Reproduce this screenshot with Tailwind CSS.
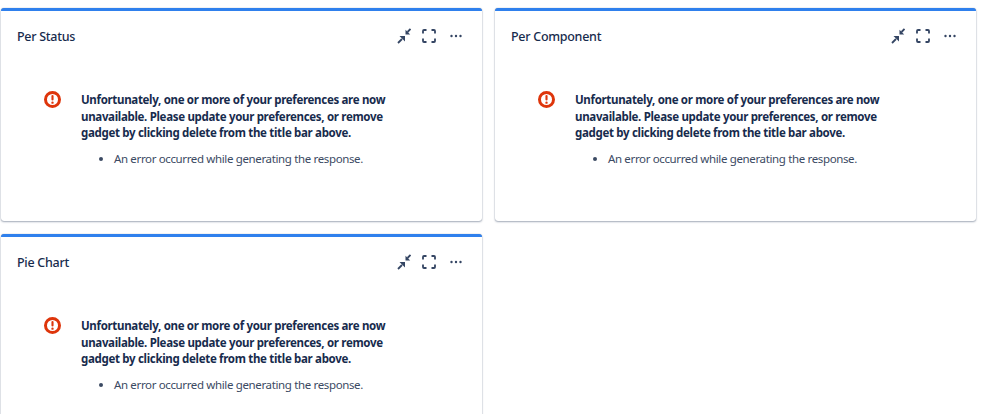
<!DOCTYPE html>
<html>
<head>
  <meta charset="utf-8">
  <meta name="viewport" content="width=device-width">
  <title>Dashboard</title>
  <script src="https://cdn.jsdelivr.net/npm/@tailwindcss/browser@4"></script>
</head>
<body class="bg-white h-[414px] overflow-hidden font-['Noto_Sans',sans-serif]">
  <main class="grid grid-cols-[481px_481px] gap-[13px] pt-[8px] pl-[1px]">

    <section class="h-[213px] bg-white rounded-[3px] border-t-[3px] border-[#2f80ed] shadow-[0_1px_2px_rgba(9,30,66,0.35),0_0_1px_rgba(9,30,66,0.4)]">
      <header class="flex items-center justify-between pl-[16px] pr-[19px] pt-[17px] h-[35px]">
        <h2 class="text-[12.500px] font-medium text-[#172b4d] tracking-[-0.28px]">Per Status</h2>
        <div class="flex items-center gap-[12px] text-[#344563] -mt-[2px]">
          <svg class="-mr-[1px]" width="17" height="16" viewBox="0 0 17 16" fill="currentColor"><path d="M11 8v5.500L5.500 8z"/><path d="M4 15l4-4" stroke="currentColor" stroke-width="1.800" fill="none"/><path d="M11.500 6.500V1.800l4.700 4.700z"/><path d="M16.500 1l-3 3" stroke="currentColor" stroke-width="1.800" fill="none"/></svg>
          <svg class="mr-[1px]" width="14" height="14" viewBox="0 0 14 14" fill="none" stroke="currentColor" stroke-width="1.800"><path d="M1 4.500V2a1 1 0 0 1 1-1h2.500M9.500 1H12a1 1 0 0 1 1 1v2.500M13 9.500V12a1 1 0 0 1-1 1H9.500M4.500 13H2a1 1 0 0 1-1-1V9.500"/></svg>
          <svg width="14" height="14" viewBox="0 0 14 14" fill="currentColor"><circle cx="2.500" cy="7" r="1.200"/><circle cx="7" cy="7" r="1.200"/><circle cx="11.500" cy="7" r="1.200"/></svg>
        </div>
      </header>
      <div class="flex mt-[46px] pl-[43px]">
        <svg class="-mt-[1px] shrink-0" width="17" height="17" viewBox="0 0 16 16"><circle cx="8" cy="8" r="6.600" fill="#fff" stroke="#de350b" stroke-width="2.800"/><rect x="7" y="3.800" width="2" height="5.200" rx="1" fill="#de350b"/><circle cx="8" cy="11" r="1.100" fill="#de350b"/></svg>
        <div class="ml-[20px] w-[320px]">
          <p class="text-[11.500px] leading-[16.500px] font-bold text-[#172b4d] tracking-[-0.32px]">Unfortunately, one or more of your preferences are now unavailable. Please update your preferences, or remove gadget by clicking delete from the title bar above.</p>
          <ul class="list-disc mt-[9px] pl-[33px] text-[11.500px] leading-[16px] text-[#3b4a63] tracking-[-0.36px]">
            <li>An error occurred while generating the response.</li>
          </ul>
        </div>
      </div>
    </section>

    <section class="h-[213px] bg-white rounded-[3px] border-t-[3px] border-[#2f80ed] shadow-[0_1px_2px_rgba(9,30,66,0.35),0_0_1px_rgba(9,30,66,0.4)]">
      <header class="flex items-center justify-between pl-[16px] pr-[19px] pt-[17px] h-[35px]">
        <h2 class="text-[12.500px] font-medium text-[#172b4d] tracking-[-0.28px]">Per Component</h2>
        <div class="flex items-center gap-[12px] text-[#344563] -mt-[2px]">
          <svg class="-mr-[1px]" width="17" height="16" viewBox="0 0 17 16" fill="currentColor"><path d="M11 8v5.500L5.500 8z"/><path d="M4 15l4-4" stroke="currentColor" stroke-width="1.800" fill="none"/><path d="M11.500 6.500V1.800l4.700 4.700z"/><path d="M16.500 1l-3 3" stroke="currentColor" stroke-width="1.800" fill="none"/></svg>
          <svg class="mr-[1px]" width="14" height="14" viewBox="0 0 14 14" fill="none" stroke="currentColor" stroke-width="1.800"><path d="M1 4.500V2a1 1 0 0 1 1-1h2.500M9.500 1H12a1 1 0 0 1 1 1v2.500M13 9.500V12a1 1 0 0 1-1 1H9.500M4.500 13H2a1 1 0 0 1-1-1V9.500"/></svg>
          <svg width="14" height="14" viewBox="0 0 14 14" fill="currentColor"><circle cx="2.500" cy="7" r="1.200"/><circle cx="7" cy="7" r="1.200"/><circle cx="11.500" cy="7" r="1.200"/></svg>
        </div>
      </header>
      <div class="flex mt-[46px] pl-[43px]">
        <svg class="-mt-[1px] shrink-0" width="17" height="17" viewBox="0 0 16 16"><circle cx="8" cy="8" r="6.600" fill="#fff" stroke="#de350b" stroke-width="2.800"/><rect x="7" y="3.800" width="2" height="5.200" rx="1" fill="#de350b"/><circle cx="8" cy="11" r="1.100" fill="#de350b"/></svg>
        <div class="ml-[20px] w-[320px]">
          <p class="text-[11.500px] leading-[16.500px] font-bold text-[#172b4d] tracking-[-0.32px]">Unfortunately, one or more of your preferences are now unavailable. Please update your preferences, or remove gadget by clicking delete from the title bar above.</p>
          <ul class="list-disc mt-[9px] pl-[33px] text-[11.500px] leading-[16px] text-[#3b4a63] tracking-[-0.36px]">
            <li>An error occurred while generating the response.</li>
          </ul>
        </div>
      </div>
    </section>

    <section class="h-[213px] bg-white rounded-[3px] border-t-[3px] border-[#2f80ed] shadow-[0_1px_2px_rgba(9,30,66,0.35),0_0_1px_rgba(9,30,66,0.4)]">
      <header class="flex items-center justify-between pl-[16px] pr-[19px] pt-[17px] h-[35px]">
        <h2 class="text-[12.500px] font-medium text-[#172b4d] tracking-[-0.28px]">Pie Chart</h2>
        <div class="flex items-center gap-[12px] text-[#344563] -mt-[2px]">
          <svg class="-mr-[1px]" width="17" height="16" viewBox="0 0 17 16" fill="currentColor"><path d="M11 8v5.500L5.500 8z"/><path d="M4 15l4-4" stroke="currentColor" stroke-width="1.800" fill="none"/><path d="M11.500 6.500V1.800l4.700 4.700z"/><path d="M16.500 1l-3 3" stroke="currentColor" stroke-width="1.800" fill="none"/></svg>
          <svg class="mr-[1px]" width="14" height="14" viewBox="0 0 14 14" fill="none" stroke="currentColor" stroke-width="1.800"><path d="M1 4.500V2a1 1 0 0 1 1-1h2.500M9.500 1H12a1 1 0 0 1 1 1v2.500M13 9.500V12a1 1 0 0 1-1 1H9.500M4.500 13H2a1 1 0 0 1-1-1V9.500"/></svg>
          <svg width="14" height="14" viewBox="0 0 14 14" fill="currentColor"><circle cx="2.500" cy="7" r="1.200"/><circle cx="7" cy="7" r="1.200"/><circle cx="11.500" cy="7" r="1.200"/></svg>
        </div>
      </header>
      <div class="flex mt-[46px] pl-[43px]">
        <svg class="-mt-[1px] shrink-0" width="17" height="17" viewBox="0 0 16 16"><circle cx="8" cy="8" r="6.600" fill="#fff" stroke="#de350b" stroke-width="2.800"/><rect x="7" y="3.800" width="2" height="5.200" rx="1" fill="#de350b"/><circle cx="8" cy="11" r="1.100" fill="#de350b"/></svg>
        <div class="ml-[20px] w-[320px]">
          <p class="text-[11.500px] leading-[16.500px] font-bold text-[#172b4d] tracking-[-0.32px]">Unfortunately, one or more of your preferences are now unavailable. Please update your preferences, or remove gadget by clicking delete from the title bar above.</p>
          <ul class="list-disc mt-[9px] pl-[33px] text-[11.500px] leading-[16px] text-[#3b4a63] tracking-[-0.36px]">
            <li>An error occurred while generating the response.</li>
          </ul>
        </div>
      </div>
    </section>

  </main>
</body>
</html>
